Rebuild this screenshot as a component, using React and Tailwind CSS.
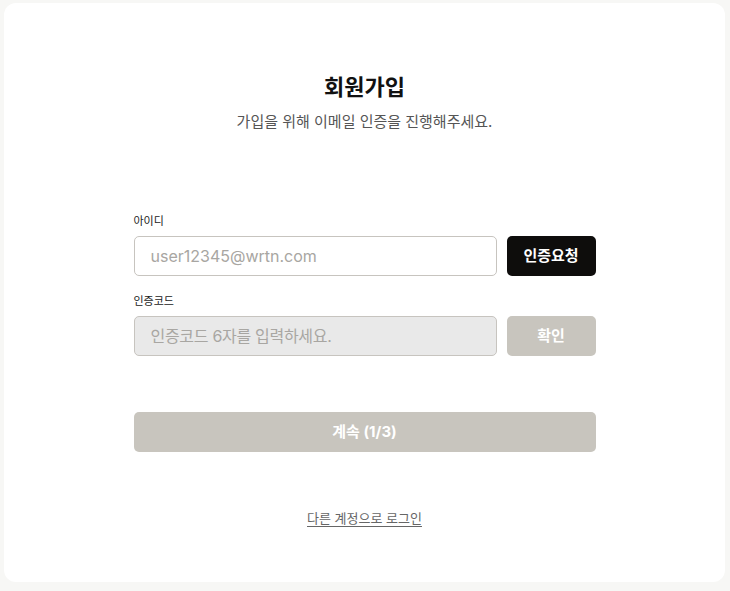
import React from 'react';

export default function App() {
  return (
    <div
      className="h-[591px] w-full bg-[#f7f7f5] pt-[3px] pl-[4px] pr-[5px] pb-[9px]"
      style={{ fontFamily: "Inter, 'Noto Sans CJK KR', sans-serif" }}
    >
      <div className="h-full rounded-[12px] bg-white flex flex-col items-center">
        <h1 className="mt-[68px] text-[22px] leading-[32px] font-bold text-[#111]">회원가입</h1>
        <p className="mt-[8px] text-[15px] leading-[22px] text-[#555]">가입을 위해 이메일 인증을 진행해주세요.</p>

        <div className="mt-[80px] w-[462px] flex flex-col">
          <label className="text-[11px] leading-[16px] text-[#222]">아이디</label>
          <div className="mt-[7px] flex gap-[10px]">
            <input
              className="h-[40px] flex-1 rounded-[5px] border border-[#c7c4bf] bg-white px-[16px] text-[16px] text-[#222] placeholder:text-[#a8a6a2] outline-none"
              placeholder="user12345@wrtn.com"
            />
            <button className="h-[40px] w-[89px] rounded-[5px] bg-[#0e0d0c] text-[15px] font-bold text-white">인증요청</button>
          </div>

          <label className="mt-[17px] text-[11px] leading-[16px] text-[#222]">인증코드</label>
          <div className="mt-[7px] flex gap-[10px]">
            <input
              disabled
              className="h-[40px] flex-1 rounded-[5px] border border-[#c7c4bf] bg-[#e9e9e9] px-[16px] text-[16px] tracking-[-0.3px] placeholder:text-[#a8a6a2] outline-none"
              placeholder="인증코드 6자를 입력하세요."
            />
            <button className="h-[40px] w-[89px] rounded-[5px] bg-[#c8c5be] text-[15px] font-bold text-white">확인</button>
          </div>

          <button className="mt-[56px] h-[40px] w-full rounded-[5px] bg-[#c8c5be] text-[15px] font-bold text-white">계속 (1/3)</button>

          <a className="mt-[56px] self-center text-[13px] leading-[20px] text-[#666] underline underline-offset-[3px] cursor-pointer">다른 계정으로 로그인</a>
        </div>
      </div>
    </div>
  );
}
